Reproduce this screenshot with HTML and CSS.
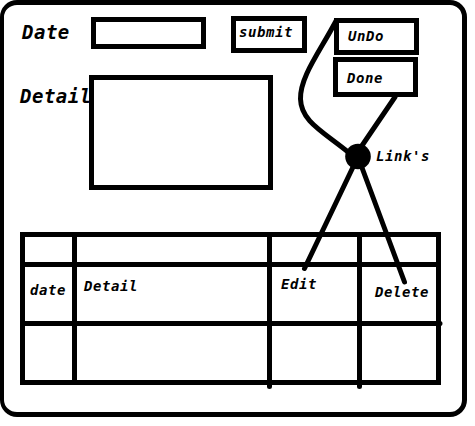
FILE: index.html
```html
<!DOCTYPE html>
<html lang="en">
<head>
<meta charset="utf-8">
<title>Date and detail form</title>
<link rel="stylesheet" href="styles.css">
</head>
<body>
<main class="frame">
  <section class="form">
    <div class="fields">
      <div class="row">
        <span class="label date-label">Date</span>
        <div class="box date-input"></div>
        <div class="box submit">submit</div>
      </div>
      <div class="row detail-row">
        <span class="label detail-label">Detail</span>
        <div class="box detail-input"></div>
      </div>
    </div>
    <div class="actions">
      <div class="box undo">UnDo</div>
      <div class="box done">Done</div>
      <span class="links">Link's</span>
    </div>
  </section>
  <section class="table">
    <div></div><div></div><div></div><div></div>
    <div class="cell-date">date</div><div class="cell-detail">Detail</div><div class="cell-edit">Edit</div><div class="cell-delete">Delete</div>
    <div></div><div></div><div></div><div></div>
  </section>
</main>
<svg class="connectors" width="475" height="426" viewBox="0 0 475 426">
  <path d="M336 21C319 53 300 77 300.5 99C301 121 322 131 348 152"/>
  <path d="M395 97L359 150M354 165L304.500 268.500M361 165L404.500 282"/>
  <path d="M269.500 383V386.500M359.500 383V386.500M439 323.500H440"/>
  <circle cx="358" cy="156.500" r="12.800"/>
</svg>
</body>
</html>
```
FILE: styles.css
```css
* {
  box-sizing: border-box;
}

body {
  margin: 0;
  background: #fff;
  color: #000;
  font: italic bold 14px/16px "DejaVu Sans Mono", monospace;
  letter-spacing: 0.57px;
}

.frame {
  width: 467px;
  height: 417px;
  border: 5px solid #000;
  border-left-width: 4px;
  border-radius: 17px;
}

.form {
  display: flex;
  height: 227px;
}

.fields {
  width: 329px;
  padding-top: 11px;
}

.row {
  display: flex;
  align-items: flex-start;
}

.label {
  flex: none;
  font-size: 19px;
  line-height: 22px;
  letter-spacing: 0.5px;
}

.date-label {
  width: 87px;
  padding: 5px 0 0 18px;
}

.detail-label {
  width: 85px;
  padding: 10px 0 0 16px;
}

.box {
  flex: none;
  border: 5px solid #000;
}

.date-input {
  width: 115px;
  height: 32px;
  margin-top: 1px;
}

.submit {
  width: 76px;
  height: 37px;
  margin-left: 25px;
  padding: 3px 0 0 3px;
}

.detail-row {
  margin-top: 22px;
}

.detail-input {
  width: 184px;
  height: 115px;
  background: #fff;
}

.actions {
  display: flex;
  flex-direction: column;
  padding-top: 13px;
}

.undo {
  width: 85px;
  height: 37px;
  margin-left: 1px;
  padding: 5px 0 0 9px;
}

.done {
  width: 85px;
  height: 40px;
  margin-top: 2px;
  padding: 8px 0 0 9px;
}

.links {
  margin: 51px 0 0 43px;
}

.table {
  display: grid;
  grid-template-columns: 47px 190px 85px 74px;
  grid-template-rows: 25px 54px 54px;
  gap: 5px;
  width: 421px;
  margin-left: 16px;
  padding: 5px;
  background: #000;
}

.table > div {
  background: #fff;
}

.table > .cell-date {
  padding: 15px 0 0 5px;
}

.table > .cell-detail {
  padding: 11px 0 0 7px;
}

.table > .cell-edit {
  padding: 9px 0 0 9px;
}

.table > .cell-delete {
  padding: 17px 0 0 13px;
}

.connectors {
  position: absolute;
  top: 0;
  left: 0;
  fill: none;
  stroke: #000;
  stroke-width: 5px;
  stroke-linecap: round;
}

.connectors circle {
  fill: #000;
  stroke: none;
}
```
